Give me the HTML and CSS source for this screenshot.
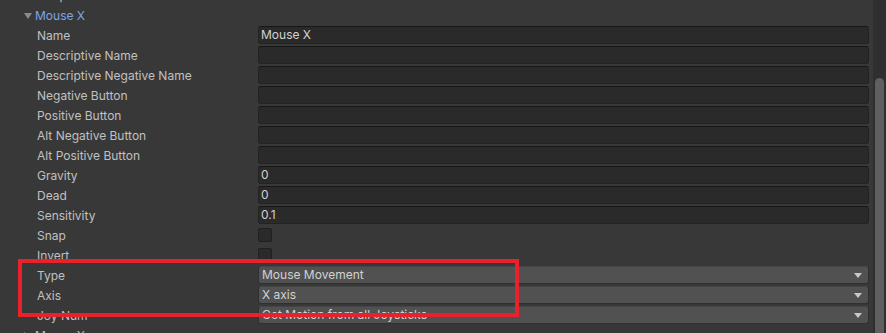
FILE: index.html
```html
<!DOCTYPE html>
<html lang="en">
<head>
    <meta charset="UTF-8">
    <title>Input Manager</title>
    <link rel="stylesheet" href="styles.css">
</head>
<body>
    <div id="inspector">
        <div class="axisList">
            <div class="row header collapsed"><span class="foldout"></span><span class="headerText">Jump</span></div>
            <div class="row header"><span class="foldout"></span><span class="headerText">Mouse X</span></div>
            <div class="row"><span class="label">Name</span><div class="field">Mouse X</div></div>
            <div class="row"><span class="label">Descriptive Name</span><div class="field"></div></div>
            <div class="row"><span class="label">Descriptive Negative Name</span><div class="field"></div></div>
            <div class="row"><span class="label">Negative Button</span><div class="field"></div></div>
            <div class="row"><span class="label">Positive Button</span><div class="field"></div></div>
            <div class="row"><span class="label">Alt Negative Button</span><div class="field"></div></div>
            <div class="row"><span class="label">Alt Positive Button</span><div class="field"></div></div>
            <div class="row"><span class="label">Gravity</span><div class="field">0</div></div>
            <div class="row"><span class="label">Dead</span><div class="field">0</div></div>
            <div class="row"><span class="label">Sensitivity</span><div class="field">0.1</div></div>
            <div class="row"><span class="label">Snap</span><div class="toggle"></div></div>
            <div class="row"><span class="label">Invert</span><div class="toggle"></div></div>
            <div class="row"><span class="label">Type</span><div class="dropdown">Mouse Movement<span class="arrow"></span></div></div>
            <div class="row"><span class="label">Axis</span><div class="dropdown">X axis<span class="arrow"></span></div></div>
            <div class="row"><span class="label">Joy Num</span><div class="dropdown">Get Motion from all Joysticks<span class="arrow"></span></div></div>
            <div class="row header collapsed"><span class="foldout"></span><span class="headerText">Mouse X</span></div>
            <div class="highlight"></div>
        </div>
        <div class="scrollbar"><div class="thumb"></div></div>
    </div>
</body>
</html>
```

FILE: styles.css
```css
body {
    margin: 0;
    height: 333px;
    overflow: hidden;
    background-color: #383838;
    font-family: Inter, "Noto Sans", sans-serif;
    font-size: 12px;
    color: #c0c0c0;
}
#inspector {
    display: flex;
    height: 333px;
}
.axisList {
    flex: 1;
    position: relative;
    margin-top: -15px;
    padding-right: 4px;
}
.row {
    display: flex;
    align-items: center;
    height: 20px;
}
.label {
    width: 221px;
    padding-left: 37px;
    flex-shrink: 0;
    white-space: nowrap;
}
.header {
    padding-left: 24px;
}
.foldout {
    width: 0;
    height: 0;
    border-left: 4px solid transparent;
    border-right: 4px solid transparent;
    border-top: 6px solid #8b8b8b;
    margin-right: 3px;
    margin-top: 1px;
}
.collapsed .foldout {
    border-top: 4px solid transparent;
    border-bottom: 4px solid transparent;
    border-left: 6px solid #8b8b8b;
    border-right: 0;
    margin-right: 5px;
}
.headerText {
    color: #7ca4e6;
}
.collapsed .headerText {
    color: #c0c0c0;
}
.field {
    flex: 1;
    height: 16px;
    line-height: 16px;
    padding-left: 2px;
    background-color: #2a2a2a;
    border: 1px solid #232323;
    border-top-color: #171717;
    border-radius: 3px;
    color: #d2d2d2;
}
.toggle {
    width: 12px;
    height: 12px;
    background-color: #2a2a2a;
    border: 1px solid #202020;
    border-radius: 2px;
}
.dropdown {
    flex: 1;
    position: relative;
    height: 16px;
    line-height: 16px;
    padding-left: 3px;
    background-color: #515151;
    border: 1px solid #303030;
    border-top-color: #454545;
    border-radius: 3px;
    color: #d2d2d2;
}
.arrow {
    position: absolute;
    right: 6px;
    top: 6px;
    width: 0;
    height: 0;
    border-left: 4px solid transparent;
    border-right: 4px solid transparent;
    border-top: 5px solid #c8c8c8;
}
.highlight {
    position: absolute;
    left: 18px;
    top: 274px;
    width: 493px;
    height: 50px;
    border: 4px solid #e8212b;
}
.scrollbar {
    width: 13px;
    background-color: #2f2f2f;
    padding-top: 78px;
    display: flex;
    justify-content: center;
}
.thumb {
    width: 9px;
    height: 300px;
    background-color: #5f5f5f;
    border-radius: 5px;
}
```
